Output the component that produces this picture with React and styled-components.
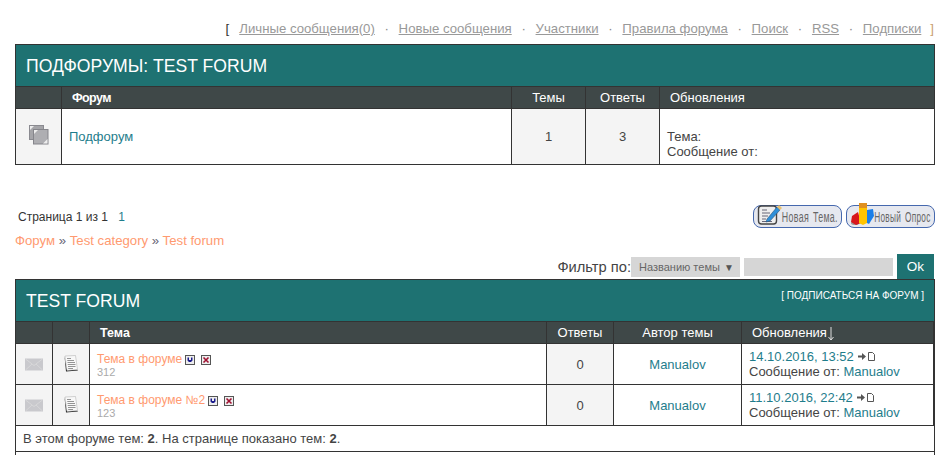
import React from "react";
import styled, { createGlobalStyle } from "styled-components";

const GlobalStyle = createGlobalStyle`
  html, body {
    margin: 0;
    padding: 0;
    background: #fff;
  }
  body {
    font-family: "Liberation Sans", Arial, sans-serif;
    font-size: 13px;
    color: #333;
  }
`;

const Page = styled.div`
  height: 455px;
  overflow: hidden;
  padding: 0 16px 0 15px;
  box-sizing: border-box;
`;

const TopNav = styled.div`
  display: flex;
  justify-content: flex-end;
  align-items: center;
  height: 16px;
  padding-top: 20px;
  margin-bottom: 8px;
  padding-right: 1px;
  font-size: 13.2px;
  color: #777;
`;

const Bracket = styled.span`
  color: ${(props) => props.$color};
  margin: ${(props) => props.$margin};
`;

const NavLink = styled.a`
  color: #999;
  text-decoration: underline;
`;

const Dot = styled.span`
  width: 23.8px;
  text-align: center;
  color: #888;
`;

const Table = styled.table`
  width: 920px;
  table-layout: fixed;
  border-collapse: collapse;
  border: 1px solid #333;
`;

const TitleCell = styled.th`
  background: #1e7272;
  border: 1px solid #333;
  padding: 0;
  height: ${(props) => props.$height}px;
  font-weight: normal;
  color: #fff;
`;

const TitleRow = styled.div`
  display: flex;
  justify-content: space-between;
  align-items: flex-start;
  padding: 0 10px;
`;

const TitleText = styled.span`
  font-size: 17.6px;
  line-height: 40px;
  text-transform: uppercase;
`;

const Subscribe = styled.a`
  font-size: 10px;
  line-height: 12px;
  margin-top: 9px;
  color: #fff;
  text-transform: uppercase;
`;

const HeadCell = styled.th`
  background: #3f4848;
  border: 1px solid #333;
  height: 21px;
  padding: 0 ${(props) => (props.$left ? "10px" : "0")};
  color: #fff;
  font-size: ${(props) => (props.$bold ? "12.5px" : "13px")};
  font-weight: ${(props) => (props.$bold ? "bold" : "normal")};
  letter-spacing: ${(props) => (props.$tight ? "-0.6px" : "normal")};
  text-align: ${(props) => (props.$left ? "left" : "center")};
  box-shadow: ${(props) => (props.$edge ? "inset -1px 0 0 #333" : "none")};
`;

const Cell = styled.td`
  border: 1px solid #333;
  padding: ${(props) => props.$padding || "0 7px"};
  height: ${(props) => props.$height}px;
  background: ${(props) => (props.$shade ? "#f4f4f4" : "#fff")};
  text-align: ${(props) => (props.$center ? "center" : "left")};
  vertical-align: ${(props) => props.$valign || "middle"};
  line-height: 15px;
  color: #444;
  box-shadow: ${(props) => (props.$edge ? "inset -1px 0 0 #333" : "none")};
`;

const TealLink = styled.a`
  color: #1f7d8c;
`;

const OrangeLink = styled.a`
  color: #ff9a70;
`;

const TopicLine = styled.div`
  display: flex;
  align-items: center;
  gap: 6px;
  font-size: 12px;
  line-height: 15px;
  margin-top: 1px;

  svg {
    margin-top: 2px;
  }
`;

const TopicTitle = styled(OrangeLink)`
  margin-right: -3px;
`;

const TopicViews = styled.div`
  color: #aaa;
  font-size: 11px;
  line-height: 12px;
  margin-top: -1px;
`;

const LastDate = styled.span`
  display: inline-flex;
  align-items: center;
  gap: 4px;
  color: #1f7d8c;
`;

const PagesRow = styled.div`
  display: flex;
  justify-content: space-between;
  align-items: flex-start;
  margin-top: 39px;
  height: 28px;
`;

const Pager = styled.div`
  font-size: 12px;
  line-height: 14px;
  padding: 6px 0 0 3px;
  color: #333;
`;

const PagerNum = styled.span`
  color: #1f7d8c;
  margin-left: 7px;
`;

const Buttons = styled.div`
  display: flex;
  gap: 4px;
  padding-top: 1px;
`;

const ActionButton = styled.a`
  position: relative;
  box-sizing: border-box;
  width: 89px;
  height: 23px;
  display: flex;
  align-items: center;
  justify-content: flex-end;
  padding-right: 3px;
  background: #e6e8ef;
  border: 1px solid #4568ae;
  border-radius: 8px;
`;

const ButtonLabel = styled.span`
  display: block;
  color: #666;
  font-size: 14px;
  letter-spacing: 0.5px;
  word-spacing: 2px;
  white-space: nowrap;
  transform: scaleX(${(props) => props.$scale});
  transform-origin: right center;
`;

const ButtonIcon = styled.svg`
  position: absolute;
  left: 3px;
  top: -3px;
`;

const Crumbs = styled.div`
  font-size: 13.2px;
  line-height: 16px;
  margin-top: 1px;
  color: #667;
`;

const FilterRow = styled.div`
  display: flex;
  justify-content: flex-end;
  align-items: center;
  height: 25px;
  margin-top: 5px;
  padding-right: 1px;
`;

const FilterLabel = styled.span`
  font-size: 14.7px;
  color: #444;
`;

const SelectBox = styled.div`
  box-sizing: border-box;
  width: 109px;
  height: 20px;
  margin-top: 1px;
  display: flex;
  justify-content: space-between;
  align-items: center;
  padding: 0 6px 0 8px;
  background: #d6d6d6;
  color: #666;
  font-size: 11px;
`;

const Arrow = styled.span`
  font-size: 10px;
  color: #555;
`;

const FilterInput = styled.input`
  box-sizing: border-box;
  width: 149px;
  height: 18px;
  margin: 1px 0 0 4px;
  border: none;
  padding: 0;
  background: #d6d6d6;
`;

const OkButton = styled.button`
  width: 37px;
  height: 25px;
  margin-left: 4px;
  border: none;
  padding: 0;
  background: #1e7272;
  color: #fff;
  font-family: inherit;
  font-size: 13.5px;
`;

const SortArrow = styled.svg`
  vertical-align: -4px;
  margin-left: 1px;
`;

const SubforumIcon = () => (
  <svg width="20" height="20" viewBox="0 0 20 20">
    <rect x="0.5" y="0.5" width="14" height="14" fill="#a5a5a9" stroke="#8a8a90" />
    <path d="M1 5 L5 1 H1Z" fill="#eee" />
    <rect x="4.5" y="4.5" width="14.5" height="14.5" fill="#aeaeb2" stroke="#85858b" />
    <path d="M5 9 L9 5 H5Z M18.5 14 L14 18.5 H18.5Z" fill="#eee" />
  </svg>
);

const EnvelopeIcon = () => (
  <svg width="18" height="13" viewBox="0 0 18 13">
    <rect width="18" height="12" y="0.5" fill="#c9c9cd" />
    <path d="M0.5 1 L9 7.5 L17.5 1 M0.5 12 L7 6 M17.5 12 L11 6" fill="none" stroke="#dadadc" strokeWidth="0.8" />
  </svg>
);

const DocIcon = () => (
  <svg width="15" height="17" viewBox="0 0 15 17">
    <path d="M0.5 1 L2 16.5 L14 15.5 L13 14.5 L3 15Z" fill="#222" />
    <path d="M1 1 L11.5 0.5 L13.5 14.5 L3 15.5Z" fill="#f8f8f8" stroke="#aaa" strokeWidth="0.5" />
    <path d="M3 3.5 H7 M3.3 5.5 H10 M3.5 7.5 H11 M3.7 9.5 H11.5 M4 11.5 H11.5 M4.2 13.5 H9" stroke="#888" strokeWidth="0.9" />
  </svg>
);

const DownIcon = () => (
  <svg width="10" height="10" viewBox="0 0 10 10">
    <rect x="0.5" y="0.5" width="9" height="9" fill="#eee" stroke="#555" />
    <path d="M2.5 2.5 V5.5 L4 7 H6 L7.5 5.5 V2.5 H6 V5 H4 V2.5Z" fill="#1a1a8c" />
  </svg>
);

const CloseIcon = () => (
  <svg width="10" height="10" viewBox="0 0 10 10">
    <rect x="0.5" y="0.5" width="9" height="9" fill="#eee" stroke="#555" />
    <path d="M2.5 2.5 L7.5 7.5 M7.5 2.5 L2.5 7.5" stroke="#a01030" strokeWidth="1.6" />
  </svg>
);

const LastPostIcon = () => (
  <svg width="17" height="9" viewBox="0 0 17 9">
    <path d="M0 3.5 H4 V1 L8 4.5 L4 8 V5.5 H0Z" fill="#555" />
    <path d="M10.5 0.5 H14.5 L16.5 2.5 V8.5 H10.5Z" fill="#fff" stroke="#555" />
  </svg>
);

const NoteIcon = () => (
  <ButtonIcon width="26" height="24" viewBox="0 0 26 24">
    <rect x="1.5" y="3" width="18" height="18" rx="3" fill="#eee" stroke="#444" strokeWidth="1.4" />
    <path d="M5 7 H10 M5 10 H13 M5 13 H11 M5 16 H9 M5 18.5 H15" stroke="#667" />
    <path d="M10 16 L20 4 L23 7 L13 18 L9 19Z" fill="#2f8fd8" stroke="#246" strokeWidth="0.5" />
    <path d="M20 4 L22 2 L25 5 L23 7Z" fill="#e8c070" />
  </ButtonIcon>
);

const PollIcon = () => (
  <ButtonIcon width="24" height="24" viewBox="0 0 24 24">
    <ellipse cx="5" cy="20" rx="4" ry="2" fill="#999" />
    <path d="M2 13 L8 9 L11 20 L6 22 L1 19Z" fill="#d8161c" />
    <rect x="9" y="0" width="8" height="5" fill="#e09020" />
    <path d="M9 5 H17 V20 L13 22 L9 20Z" fill="#ffc400" />
    <path d="M17 7 L23 6 L24 13 L19 21 L17 20Z" fill="#1b7ee8" />
  </ButtonIcon>
);

const navItems = [
  "Личные сообщения(0)",
  "Новые сообщения",
  "Участники",
  "Правила форума",
  "Поиск",
  "RSS",
  "Подписки",
];

const topics = [
  { title: "Тема в форуме", views: "312", date: "14.10.2016, 13:52" },
  { title: "Тема в форуме №2", views: "123", date: "11.10.2016, 22:42" },
];

const App = () => (
  <Page>
    <GlobalStyle />
    <TopNav>
      <Bracket $color="#333" $margin="0 10px 0 0">[</Bracket>
      {navItems.map((item, i) => (
        <React.Fragment key={item}>
          {i > 0 && <Dot>·</Dot>}
          <NavLink>{item}</NavLink>
        </React.Fragment>
      ))}
      <Bracket $color="#c9a070" $margin="0 0 0 9px">]</Bracket>
    </TopNav>

    <Table>
      <colgroup>
        <col width="46" />
        <col width="450" />
        <col width="74" />
        <col width="74" />
        <col width="275" />
      </colgroup>
      <thead>
        <tr>
          <TitleCell colSpan={5} $height={41}>
            <TitleRow>
              <TitleText>Подфорумы: Test forum</TitleText>
            </TitleRow>
          </TitleCell>
        </tr>
        <tr>
          <HeadCell />
          <HeadCell $left $bold $tight>Форум</HeadCell>
          <HeadCell>Темы</HeadCell>
          <HeadCell>Ответы</HeadCell>
          <HeadCell $left>Обновления</HeadCell>
        </tr>
      </thead>
      <tbody>
        <tr>
          <Cell $shade $center $height={55}><SubforumIcon /></Cell>
          <Cell><TealLink>Подфорум</TealLink></Cell>
          <Cell $shade $center>1</Cell>
          <Cell $shade $center>3</Cell>
          <Cell $valign="bottom" $padding="0 7px 5px">Тема:<br />Сообщение от:</Cell>
        </tr>
      </tbody>
    </Table>

    <PagesRow>
      <Pager>Страница 1 из 1 <PagerNum>1</PagerNum></Pager>
      <Buttons>
        <ActionButton><NoteIcon /><ButtonLabel $scale={0.63}>Новая Тема.</ButtonLabel></ActionButton>
        <ActionButton><PollIcon /><ButtonLabel $scale={0.59}>Новый Опрос</ButtonLabel></ActionButton>
      </Buttons>
    </PagesRow>

    <Crumbs>
      <OrangeLink>Форум</OrangeLink> » <OrangeLink>Test category</OrangeLink> » <OrangeLink>Test forum</OrangeLink>
    </Crumbs>

    <FilterRow>
      <FilterLabel>Фильтр по:</FilterLabel>
      <SelectBox>Названию темы <Arrow>▼</Arrow></SelectBox>
      <FilterInput />
      <OkButton>Ok</OkButton>
    </FilterRow>

    <Table>
      <colgroup>
        <col width="37" />
        <col width="37" />
        <col width="457" />
        <col width="67" />
        <col width="128" />
        <col width="193" />
      </colgroup>
      <thead>
        <tr>
          <TitleCell colSpan={6} $height={41}>
            <TitleRow>
              <TitleText>Test forum</TitleText>
              <Subscribe>[ Подписаться на форум ]</Subscribe>
            </TitleRow>
          </TitleCell>
        </tr>
        <tr>
          <HeadCell />
          <HeadCell />
          <HeadCell $left $bold>Тема</HeadCell>
          <HeadCell>Ответы</HeadCell>
          <HeadCell>Автор темы</HeadCell>
          <HeadCell $left $edge>
            Обновления
            <SortArrow width="6" height="14" viewBox="0 0 6 14">
              <path d="M3 0 V13 M0.5 10 L3 13 L5.5 10" fill="none" stroke="#ddd" />
            </SortArrow>
          </HeadCell>
        </tr>
      </thead>
      <tbody>
        {topics.map((topic) => (
          <tr key={topic.date}>
            <Cell $shade $center $height={37} $padding="3px 0 0"><EnvelopeIcon /></Cell>
            <Cell $shade $center $padding="2px 0 0"><DocIcon /></Cell>
            <Cell>
              <TopicLine>
                <TopicTitle>{topic.title}</TopicTitle>
                <DownIcon />
                <CloseIcon />
              </TopicLine>
              <TopicViews>{topic.views}</TopicViews>
            </Cell>
            <Cell $shade $center>0</Cell>
            <Cell $center><TealLink>Manualov</TealLink></Cell>
            <Cell $edge>
              <LastDate>{topic.date} <LastPostIcon /></LastDate>
              <br />
              Сообщение от: <TealLink>Manualov</TealLink>
            </Cell>
          </tr>
        ))}
        <tr>
          <Cell colSpan={6} $height={25}>В этом форуме тем: <b>2</b>. На странице показано тем: <b>2</b>.</Cell>
        </tr>
        <tr>
          <Cell colSpan={6} $height={40} />
        </tr>
      </tbody>
    </Table>
  </Page>
);

export default App;
